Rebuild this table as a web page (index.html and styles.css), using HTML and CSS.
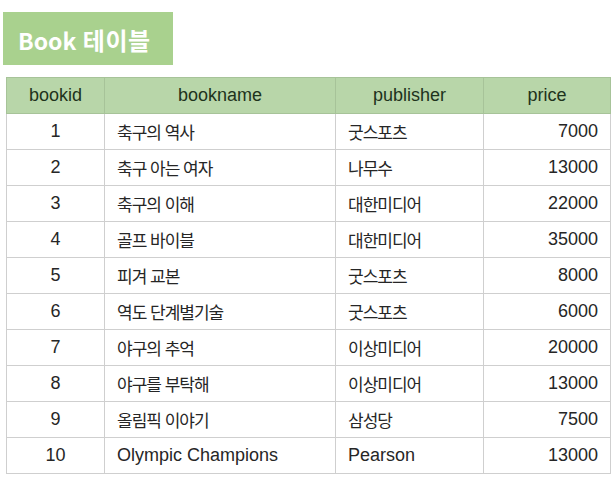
FILE: index.html
```html
<!DOCTYPE html>
<html lang="ko">
<head>
<meta charset="utf-8">
<link rel="stylesheet" href="styles.css">
</head>
<body>
<div class="title">Book <span class="title-ko">테이블</span></div>
<table class="books">
  <colgroup>
    <col class="c1"><col class="c2"><col class="c3"><col class="c4">
  </colgroup>
  <thead>
    <tr><th>bookid</th><th>bookname</th><th>publisher</th><th>price</th></tr>
  </thead>
  <tbody>
    <tr><td class="id">1</td><td><span class="ko">축구의 역사</span></td><td><span class="ko">굿스포츠</span></td><td class="num">7000</td></tr>
    <tr><td class="id">2</td><td><span class="ko">축구 아는 여자</span></td><td><span class="ko">나무수</span></td><td class="num">13000</td></tr>
    <tr><td class="id">3</td><td><span class="ko">축구의 이해</span></td><td><span class="ko">대한미디어</span></td><td class="num">22000</td></tr>
    <tr><td class="id">4</td><td><span class="ko">골프 바이블</span></td><td><span class="ko">대한미디어</span></td><td class="num">35000</td></tr>
    <tr><td class="id">5</td><td><span class="ko">피겨 교본</span></td><td><span class="ko">굿스포츠</span></td><td class="num">8000</td></tr>
    <tr><td class="id">6</td><td><span class="ko">역도 단계별기술</span></td><td><span class="ko">굿스포츠</span></td><td class="num">6000</td></tr>
    <tr><td class="id">7</td><td><span class="ko">야구의 추억</span></td><td><span class="ko">이상미디어</span></td><td class="num">20000</td></tr>
    <tr><td class="id">8</td><td><span class="ko">야구를 부탁해</span></td><td><span class="ko">이상미디어</span></td><td class="num">13000</td></tr>
    <tr><td class="id">9</td><td><span class="ko">올림픽 이야기</span></td><td><span class="ko">삼성당</span></td><td class="num">7500</td></tr>
    <tr><td class="id">10</td><td>Olympic Champions</td><td>Pearson</td><td class="num">13000</td></tr>
  </tbody>
</table>
</body>
</html>
```
FILE: styles.css
```css
html, body {
  margin: 0;
  padding: 0;
  background: #ffffff;
}
body {
  font-family: "Liberation Sans", "Noto Sans CJK KR", sans-serif;
  color: #262626;
}
.title {
  margin: 12px 0 0 3px;
  width: 170px;
  height: 53px;
  box-sizing: border-box;
  padding: 12px 0 0 15px;
  background: #a9d18e;
  color: #ffffff;
  font-family: "Noto Sans CJK KR", "Noto Sans", sans-serif;
  font-weight: 700;
  font-size: 23px;
  line-height: 32px;
}
.title-ko {
  font-size: 24px;
  letter-spacing: 0.5px;
}
.books {
  margin: 12px 0 0 6px;
  width: 604px;
  border-collapse: collapse;
  table-layout: fixed;
  font-size: 18px;
}
.c1 { width: 98px; }
.c2 { width: 231px; }
.c3 { width: 148px; }
.c4 { width: 127px; }
.books th, .books td {
  border: 1px solid #cfcfcf;
  height: 36px;
  padding: 0 12px 0 12px;
  box-sizing: border-box;
  vertical-align: middle;
  text-align: left;
  font-weight: 400;
  white-space: nowrap;
}
.books th {
  background: #b8d6a9;
  color: #1e331c;
  text-align: center;
  border-color: #a7c399;
}
.books td.id { text-align: center; }
.books td.num { text-align: right; }
.ko {
  font-family: "Noto Sans CJK KR", sans-serif;
  font-size: 17px;
  letter-spacing: -1px;
}
```
